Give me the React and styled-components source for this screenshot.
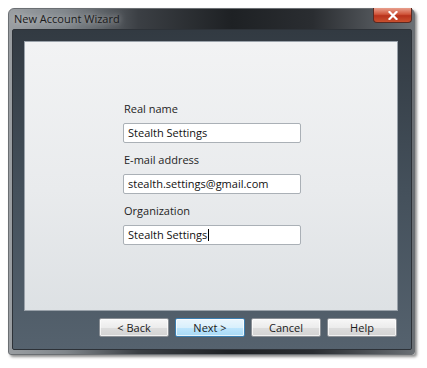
import React from 'react';
import { styled, createGlobalStyle } from 'styled-components';

const Global = createGlobalStyle`
  body {
    margin: 0;
    background: #ffffff;
    font-family: "Open Sans", "Noto Sans", sans-serif;
  }
`;

const fields = [
  { label: 'Real name', value: 'Stealth Settings' },
  { label: 'E-mail address', value: 'stealth.settings@gmail.com' },
  { label: 'Organization', value: 'Stealth Settings', caret: true },
];

const buttons = ['< Back', 'Next >', 'Cancel', 'Help'];

const App = () => {
  return (
    <Page>
      <Global />
      <Window>
        <TitleBar>
          <Title>New Account Wizard</Title>
          <CloseButton>
            <svg width="10" height="9" viewBox="0 0 10 9">
              <path d="M1.5 1 L8.5 8 M8.5 1 L1.5 8" stroke="#fff" strokeWidth="2.2" strokeLinecap="square" />
            </svg>
          </CloseButton>
        </TitleBar>
        <Frame>
          <Panel>
            <Form>
              {fields.map((f) => (
                <Field key={f.label}>
                  <Label>{f.label}</Label>
                  <Input>
                    {f.value}
                    {f.caret && <Caret />}
                  </Input>
                </Field>
              ))}
            </Form>
          </Panel>
          <ButtonRow>
            {buttons.map((b) => (
              <Button key={b} $default={b === 'Next >'}>{b}</Button>
            ))}
          </ButtonRow>
        </Frame>
      </Window>
    </Page>
  );
};

const Page = styled.div`
  width: 427px;
  height: 368px;
  padding: 8px 0 0 8px;
  box-sizing: border-box;
`;

const Window = styled.div`
  width: 407px;
  height: 347px;
  box-sizing: border-box;
  border: 1px solid #6b6f73;
  border-radius: 6px 6px 3px 3px;
  background: linear-gradient(90deg, #9a9ea2 0%, #80868b 14%, #3b3f44 32%, #1e2124 55%, #2a2d31 75%, #6a6f74 100%);
  box-shadow: 2px 2px 3px rgba(0, 0, 0, 0.45);
  display: flex;
  flex-direction: column;
`;

const TitleBar = styled.div`
  height: 20px;
  display: flex;
  align-items: flex-start;
  justify-content: space-between;
  padding-left: 5px;
`;

const Title = styled.span`
  font-size: 11px;
  line-height: 20px;
  color: #1a1a1a;
  text-shadow: 0 0 6px rgba(230, 230, 230, 0.9);
`;

const CloseButton = styled.div`
  width: 39px;
  height: 15px;
  margin-right: 2px;
  margin-top: -1px;
  border: 1px solid #5a2a22;
  border-top: none;
  border-radius: 0 0 4px 4px;
  background: linear-gradient(180deg, #e8a08e 0%, #d0553a 45%, #b8321c 55%, #c9502e 100%);
  display: flex;
  align-items: center;
  justify-content: center;
  box-sizing: border-box;
`;

const Frame = styled.div`
  flex: 1;
  margin: 0 2px 4px 3px;
  border: 1px solid #2d3238;
  border-radius: 2px;
  background: linear-gradient(180deg, #323a42 0%, #44505b 50%, #55626e 100%);
  padding: 11px 13px 0 11px;
  display: flex;
  flex-direction: column;
`;

const Panel = styled.div`
  height: 270px;
  box-sizing: border-box;
  border: 1px solid #9aa2aa;
  background: linear-gradient(180deg, #f2f3f4 0%, #e9ebed 55%, #dde1e4 100%);
  padding: 59px 0 0 98px;
`;

const Form = styled.div`
  width: 178px;
  display: flex;
  flex-direction: column;
  gap: 9px;
`;

const Field = styled.div`
  display: flex;
  flex-direction: column;
  gap: 7px;
`;

const Label = styled.span`
  font-size: 11px;
  line-height: 15px;
  color: #1e1e1e;
  padding-left: 1px;
`;

const Input = styled.div`
  height: 20px;
  box-sizing: border-box;
  border: 1px solid #aab0b6;
  border-radius: 2px;
  background: #ffffff;
  font-size: 11px;
  line-height: 18px;
  color: #111;
  padding-left: 4px;
  display: flex;
  align-items: center;
`;

const Caret = styled.span`
  width: 1px;
  height: 12px;
  background: #000;
  margin-left: 1px;
`;

const ButtonRow = styled.div`
  display: flex;
  justify-content: flex-end;
  gap: 6px;
  padding-top: 7px;
  padding-right: 1px;
`;

const Button = styled.div`
  width: 70px;
  height: 19px;
  box-sizing: border-box;
  border: 1px solid ${(p) => (p.$default ? '#3c7fb1' : '#8a8f95')};
  border-radius: 2px;
  background: ${(p) =>
    p.$default
      ? 'linear-gradient(180deg, #eaf6fd 0%, #d9f0fc 50%, #bee6fd 51%, #a7d9f5 100%)'
      : 'linear-gradient(180deg, #f7f7f7 0%, #ececec 50%, #dddddd 51%, #d3d3d3 100%)'};
  box-shadow: inset 0 0 0 1px rgba(255, 255, 255, 0.7);
  font-size: 11px;
  line-height: 17px;
  color: #1a1a1a;
  text-align: center;
`;

export default App;
